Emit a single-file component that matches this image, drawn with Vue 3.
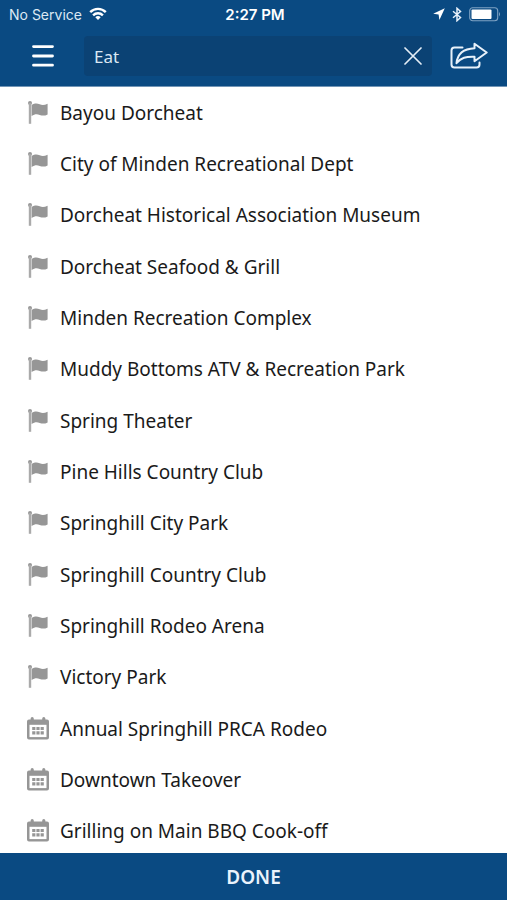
<script setup>
import { ref } from 'vue'

const query = ref('Eat')

const results = [
  { name: 'Bayou Dorcheat', type: 'place' },
  { name: 'City of Minden Recreational Dept', type: 'place' },
  { name: 'Dorcheat Historical Association Museum', type: 'place' },
  { name: 'Dorcheat Seafood & Grill', type: 'place' },
  { name: 'Minden Recreation Complex', type: 'place' },
  { name: 'Muddy Bottoms ATV & Recreation Park', type: 'place' },
  { name: 'Spring Theater', type: 'place' },
  { name: 'Pine Hills Country Club', type: 'place' },
  { name: 'Springhill City Park', type: 'place' },
  { name: 'Springhill Country Club', type: 'place' },
  { name: 'Springhill Rodeo Arena', type: 'place' },
  { name: 'Victory Park', type: 'place' },
  { name: 'Annual Springhill PRCA Rodeo', type: 'event' },
  { name: 'Downtown Takeover', type: 'event' },
  { name: 'Grilling on Main BBQ Cook-off', type: 'event' },
]
</script>

<template>
  <div class="app">
    <header class="top">
      <div class="status">
        <div class="carrier">
          <span>No Service</span>
          <svg width="18" height="14" viewBox="0 0 18 14" aria-hidden="true">
            <g fill="none" stroke="#fff" stroke-width="2.4">
              <path d="M1.2 5.2C5.6 .8 12.4 .8 16.8 5.2" />
              <path d="M4.1 8.3C6.8 5.6 11.2 5.6 13.9 8.3" />
            </g>
            <path d="M6.3 10.2Q9 7.9 11.7 10.2L9 13Z" fill="#fff" />
          </svg>
        </div>
        <time class="clock">2:27 PM</time>
        <div class="indicators">
          <svg width="12" height="12" viewBox="0 0 12 12" aria-hidden="true">
            <path d="M11.8.2L.2 5.8L5.6 6.6L6.4 12Z" fill="#fff" />
          </svg>
          <svg width="10" height="15" viewBox="0 0 10 15" aria-hidden="true">
            <path d="M1 4.2L8.5 10.5L5 13.7V1.3L8.5 4.5L1 10.8" fill="none" stroke="#e8f1fa" stroke-width="1.5" />
          </svg>
          <svg width="32" height="15" viewBox="0 0 32 15" aria-hidden="true">
            <rect x=".7" y=".7" width="28" height="13" rx="3" fill="none" stroke="#7fa3c4" stroke-width="1.1" />
            <rect x="2.5" y="2.5" width="20" height="9.5" rx="1" fill="#fff" />
            <path d="M30 5Q32 7.2 30 9.5Z" fill="#7fa3c4" />
          </svg>
        </div>
      </div>

      <form class="toolbar" role="search" @submit.prevent>
        <button class="icon-button" type="button" aria-label="Menu">
          <svg width="22" height="24" viewBox="0 0 22 24">
            <path d="M1.5 2.6H20.5M1.5 12H20.5M1.5 21.2H20.5" stroke="#fff" stroke-width="2.8" stroke-linecap="round" />
          </svg>
        </button>
        <div class="field">
          <input v-model="query" type="text" aria-label="Search" />
          <button class="icon-button" type="button" aria-label="Clear search" @click="query = ''">
            <svg width="18" height="18" viewBox="0 0 18 18">
              <path d="M1 1L17 17M17 1L1 17" stroke="#e4edf6" stroke-width="1.7" stroke-linecap="round" />
            </svg>
          </button>
        </div>
        <button class="icon-button" type="button" aria-label="Share">
          <svg width="38" height="28" viewBox="0 0 38 28" fill="none" stroke="#e8f1fa" stroke-width="2" stroke-linejoin="round" stroke-linecap="round">
            <path d="M12.5 5.5H4.5Q1.5 5.5 1.5 8.5V22.5Q1.5 25.5 4.5 25.5H26.5Q29.5 25.5 29.5 22.5V20.5" />
            <path d="M6.5 21.2C7.5 11.5 14 6.8 24.5 6.3V1.8L36.7 10.5L24.5 19.2V14.7C16 14.4 11 15.5 6.5 21.2Z" />
          </svg>
        </button>
      </form>
    </header>

    <ul class="results">
      <li v-for="item in results" :key="item.name">
        <a href="#">
          <svg v-if="item.type === 'place'" width="22" height="24" viewBox="0 0 22 24" aria-hidden="true">
            <circle cx="3" cy="2" r="2" fill="#999" />
            <path d="M1.8 2H4.2V22.8H1.8Z" fill="#aaa" />
            <path d="M4.6 4C8 1.9 10.4 2.4 12.7 3.3C15.3 4.3 17.5 4.1 20.6 2.7V13.4C17.8 15 15.2 14.8 12.7 13.9C10.2 13.1 7.8 12.9 4.6 15Z" fill="#969696" />
          </svg>
          <svg v-else width="22" height="24" viewBox="0 0 22 24" aria-hidden="true">
            <path d="M3.6 2.6V1.7A1.6 1.6 0 0 1 6.8 1.7V2.6H15.2V1.7A1.6 1.6 0 0 1 18.4 1.7V2.6H20Q22 2.6 22 4.6V20.6Q22 22.6 20 22.6H2Q0 22.6 0 20.6V4.6Q0 2.6 2 2.6Z" fill="#969696" />
            <path d="M2.5 7.8H19.5V20.1H2.5Z" fill="#fff" />
            <path d="M5.2 9.9h3.2v3.2h-3.2zM9.4 9.9h3.2v3.2h-3.2zM13.6 9.9h3.2v3.2h-3.2zM5.2 14.2h3.2v3.2h-3.2zM9.4 14.2h3.2v3.2h-3.2zM13.6 14.2h3.2v3.2h-3.2z" fill="#969696" />
          </svg>
          <span>{{ item.name }}</span>
        </a>
      </li>
    </ul>

    <button class="done" type="button">DONE</button>
  </div>
</template>

<style>
body {
  margin: 0;
  background: #fff;
}
</style>

<style scoped>
.app {
  display: flex;
  flex-direction: column;
  min-height: 100vh;
  font-family: "Noto Sans", "Open Sans", sans-serif;
  color: #1a1a1a;
}

svg {
  display: block;
  flex: none;
}

button {
  border: 0;
  padding: 0;
  font: inherit;
  color: inherit;
  cursor: pointer;
}

.top {
  background: #0a4a82;
  border-bottom: 1px solid #7195b6;
  color: #fff;
}

.status {
  display: grid;
  grid-template-columns: 1fr auto 1fr;
  align-items: center;
  height: 28px;
  padding: 0 6px 0 9px;
  font-family: Inter, sans-serif;
  font-size: 15px;
}

.carrier,
.indicators {
  display: flex;
  align-items: center;
  gap: 7px;
}

.carrier {
  color: #dce8f4;
  font-size: 14px;
}

.clock {
  font-weight: 600;
}

.indicators {
  justify-content: flex-end;
}

.toolbar {
  display: flex;
  align-items: center;
  padding: 8px 19px 10px 32px;
}

.icon-button {
  background: none;
}

.field {
  display: flex;
  flex: 1;
  align-items: center;
  min-width: 0;
  height: 40px;
  margin: 0 18px 0 30px;
  padding: 0 10px;
  box-sizing: border-box;
  border-radius: 4px;
  background: #0b4274;
}

.field input {
  flex: 1;
  min-width: 0;
  padding: 0;
  border: 0;
  outline: 0;
  background: none;
  color: #dce8f4;
  font: inherit;
  font-size: 17px;
}

.results {
  display: flex;
  flex: 1;
  flex-direction: column;
  margin: 0 0 -4px;
  padding: 0;
  list-style: none;
}

.results li {
  display: flex;
  flex: 1;
  min-height: 48px;
}

.results a {
  display: flex;
  flex: 1;
  align-items: center;
  gap: 11px;
  padding: 0 27px;
  color: inherit;
  font-size: 19px;
  line-height: 26px;
  text-decoration: none;
}

.done {
  position: sticky;
  bottom: 0;
  height: 47px;
  background: #0a4a82;
  color: #eaf3fc;
  font-size: 19px;
  font-weight: 600;
}
</style>
